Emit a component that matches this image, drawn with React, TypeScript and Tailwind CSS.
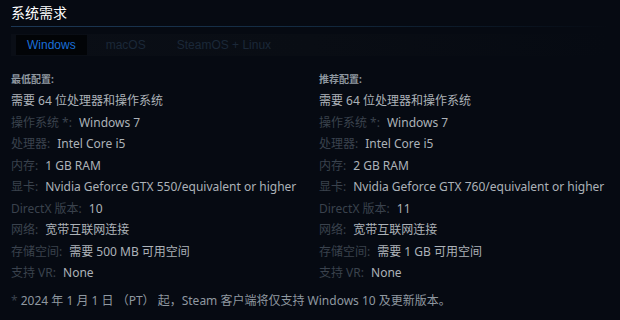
import React from 'react';

type Row = { label: string; value: string };

const minRows: Row[] = [
  { label: '操作系统 *:', value: 'Windows 7' },
  { label: '处理器:', value: 'Intel Core i5' },
  { label: '内存:', value: '1 GB RAM' },
  { label: '显卡:', value: 'Nvidia Geforce GTX 550/equivalent or higher' },
  { label: 'DirectX 版本:', value: '10' },
  { label: '网络:', value: '宽带互联网连接' },
  { label: '存储空间:', value: '需要 500 MB 可用空间' },
  { label: '支持 VR:', value: 'None' },
];

const recRows: Row[] = [
  { label: '操作系统 *:', value: 'Windows 7' },
  { label: '处理器:', value: 'Intel Core i5' },
  { label: '内存:', value: '2 GB RAM' },
  { label: '显卡:', value: 'Nvidia Geforce GTX 760/equivalent or higher' },
  { label: 'DirectX 版本:', value: '11' },
  { label: '网络:', value: '宽带互联网连接' },
  { label: '存储空间:', value: '需要 1 GB 可用空间' },
  { label: '支持 VR:', value: 'None' },
];

const SpecColumn = ({ title, rows }: { title: string; rows: Row[] }) => (
  <div>
    <div className="text-[10px] font-bold text-[#8f98a0] leading-[14px] mb-[4px]">{title}</div>
    <div className="text-[12px] leading-[21.5px] text-[#acb2b8]">需要 64 位处理器和操作系统</div>
    {rows.map((r) => (
      <div key={r.label} className="text-[12px] leading-[21.5px] whitespace-nowrap">
        <span className="text-[#3a424d]">{r.label}</span>
        <span className="ml-[7px] text-[#acb2b8]">{r.value}</span>
      </div>
    ))}
  </div>
);

const App = () => {
  return (
    <div
      className="w-[620px] h-[320px] bg-[#060a12] px-[11px] pt-[3px] overflow-hidden"
      style={{ fontFamily: '"Noto Sans", "Noto Sans CJK SC", Arial, sans-serif' }}
    >
      {/* Header */}
      <div className="text-[14px] text-white leading-[20px]">系统需求</div>
      <div className="h-px mt-[3px] bg-gradient-to-r from-[#1c3754] via-[#132a40] to-transparent" />

      {/* Tabs */}
      <div
        className="mt-[7px] flex items-center h-[22px] pl-[5px] bg-gradient-to-r from-[#0a0e16] via-[#090d14] to-transparent text-[12px]"
        style={{ fontFamily: '"Liberation Sans", Arial, sans-serif' }}
      >
        <div className="h-[20px] px-[11px] flex items-center bg-[#020407] text-[#1a6fd8]">Windows</div>
        <div className="px-[19px] text-[#1b2838]">macOS</div>
        <div className="px-[12px] text-[#1b2838]">SteamOS + Linux</div>
      </div>

      {/* Specs */}
      <div className="mt-[16px] grid grid-cols-[308px_1fr]">
        <SpecColumn title="最低配置:" rows={minRows} />
        <SpecColumn title="推荐配置:" rows={recRows} />
      </div>

      {/* Footnote */}
      <div className="mt-[7px] text-[12px] text-[#8f98a0] leading-[20px]">
        <span className="text-[#3a424d]">*</span> 2024 年 1 月 1 日 （PT） 起，Steam 客户端将仅支持 Windows 10 及更新版本。
      </div>
    </div>
  );
};

export default App;
